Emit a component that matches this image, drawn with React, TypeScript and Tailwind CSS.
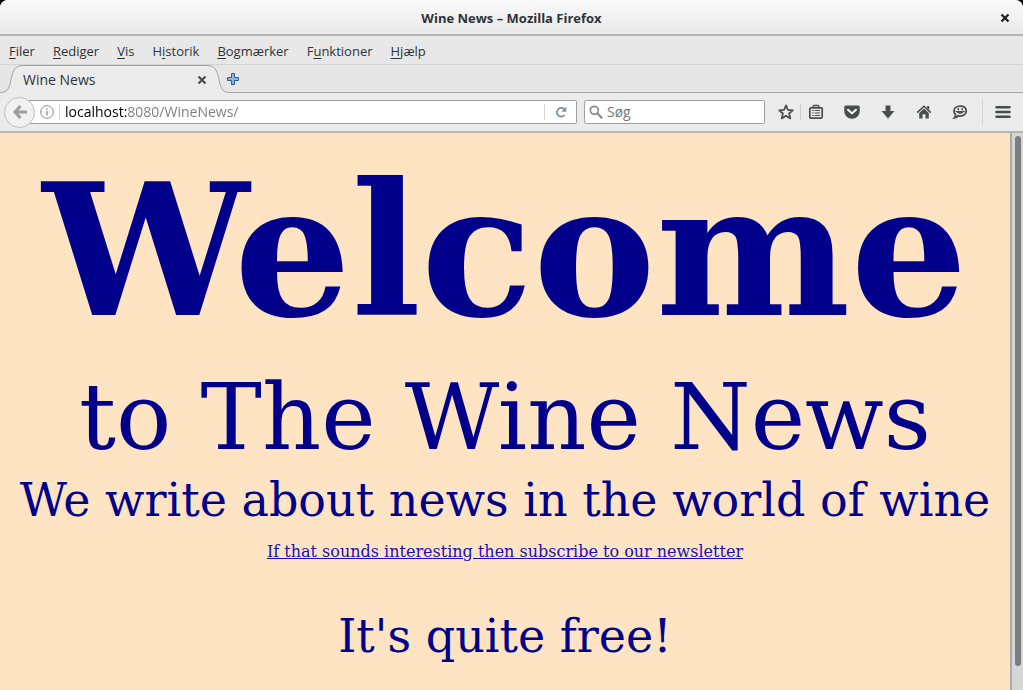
import { useState } from 'react'

const menus = [
  { before: '', key: 'F', after: 'iler' },
  { before: '', key: 'R', after: 'ediger' },
  { before: '', key: 'V', after: 'is' },
  { before: 'H', key: 'i', after: 'storik' },
  { before: '', key: 'B', after: 'ogmærker' },
  { before: 'F', key: 'u', after: 'nktioner' },
  { before: '', key: 'H', after: 'jælp' },
]

const CloseIcon = () => (
  <svg viewBox="0 0 10 10" className="h-[10px] w-[10px]" stroke="currentColor" strokeWidth="2.2">
    <path d="M1.5 1.5 8.5 8.5M8.5 1.5 1.5 8.5" />
  </svg>
)

const StarIcon = () => (
  <svg viewBox="0 0 16 16" className="h-4 w-4" fill="none" stroke="currentColor" strokeWidth="1.7" strokeLinejoin="round">
    <path d="M8 1.4 9.9 5.9 14.8 6.3 11.100 9.500 12.300 14.400 8 11.800 3.700 14.400 4.900 9.500 1.200 6.300 6.100 5.900Z" />
  </svg>
)

const BookmarksIcon = () => (
  <svg viewBox="0 0 16 16" className="h-4 w-4" fill="none" stroke="currentColor">
    <rect x="1.800" y="3.800" width="12.400" height="10.400" rx="1.200" strokeWidth="1.700" />
    <path d="M5.200 3.500V2.400q0-.900.900-.900h3.800q.900 0 .900.900v1.100" strokeWidth="1.500" />
    <path d="M4 6.500h1.600M6.600 6.500H12M4 9h1.600M6.600 9H12M4 11.500h1.600M6.600 11.500H12" strokeWidth="1.200" />
  </svg>
)

const PocketIcon = () => (
  <svg viewBox="0 0 16 16" className="h-4 w-4">
    <path d="M1.800 1.500h12.400q1.500 0 1.500 1.500v4q0 4.800-4.200 6.900-3.500 1.600-7 0Q.3 11.800.3 7V3q0-1.500 1.500-1.500Z" fill="currentColor" />
    <path d="M4 5.700 8 9.400 12 5.700" fill="none" stroke="#fff" strokeWidth="1.900" strokeLinecap="round" strokeLinejoin="round" />
  </svg>
)

const DownloadIcon = () => (
  <svg viewBox="0 0 16 16" className="h-4 w-4" fill="currentColor">
    <path d="M5.500 1.500h5v5.500h4L8 14.500 1.500 7h4Z" />
  </svg>
)

const HomeIcon = () => (
  <svg viewBox="0 0 16 16" className="h-4 w-4">
    <path d="M1.200 8.600 8 2.200l6.800 6.400" fill="none" stroke="currentColor" strokeWidth="1.500" />
    <path d="M11.200 2h2v4l-2-2Z" fill="currentColor" />
    <path d="M3.200 9 8 4.500 12.800 9v5.500H9.500v-4.200h-3v4.200H3.200Z" fill="currentColor" />
  </svg>
)

const ChatIcon = () => (
  <svg viewBox="0 0 16 16" className="h-4 w-4" fill="none" stroke="currentColor" strokeLinecap="round">
    <path d="M8.200 2.200c3.700 0 6 2 6 4.900s-2.300 5-6 5c-.8 0-1.300 0-2-.2-1 1.300-2.200 1.800-3.800 1.900.9-.8 1.200-1.700 1.200-3C2.400 9.800 2 8.500 2 7.100c0-2.900 2.500-4.900 6.200-4.900Z" strokeWidth="1.800" />
    <path d="M4.600 7.600q3.500 3.200 7.200 0Z" strokeWidth="1.300" />
    <path d="M6.300 4.900v.6M10.200 4.900v.6" strokeWidth="1.700" />
  </svg>
)

const MenuIcon = () => (
  <svg viewBox="0 0 16 16" className="h-4 w-4" stroke="currentColor" strokeWidth="2.600" strokeLinecap="round">
    <path d="M1.500 3.200h13M1.500 8h13M1.500 12.800h13" />
  </svg>
)

const TitleBar = () => (
  <header className="flex h-9 items-center rounded-t-lg border-b-2 border-[#b4b4b2] bg-linear-to-b from-[#fafafa] to-[#e9e9e9] px-[10px] pt-px">
    <div className="w-4" />
    <h1 className="flex-1 text-center font-bold text-[#2e3436]">Wine News – Mozilla Firefox</h1>
    <button aria-label="Luk vindue" className="flex w-4 justify-center text-[#1c1f20]">
      <CloseIcon />
    </button>
  </header>
)

const MenuBar = () => (
  <nav className="flex h-7 items-center gap-[18px] px-[9px] pt-[2px]">
    {menus.map((menu) => (
      <button key={menu.key + menu.after} className="text-[#2e3436]">
        {menu.before}
        <u className="underline-offset-2">{menu.key}</u>
        {menu.after}
      </button>
    ))}
  </nav>
)

const TabBar = () => (
  <div className="flex h-[29px] border-t border-[#d2d2d2] bg-[#e6e6e6]">
    <svg viewBox="0 0 23 28" className="h-7 w-[23px] shrink-0" fill="none">
      <path d="M0 27.500C7 27.500 9 24 10.500 17 12.500 7 14 .5 23 .5V28H0Z" fill="#ebebeb" />
      <path d="M0 27.500C7 27.500 9 24 10.500 17 12.500 7 14 .5 23 .5" stroke="#a3a3a3" />
    </svg>
    <div className="flex w-[184px] items-center justify-between border-t border-[#a3a3a3] bg-[#ebebeb] text-[14px] text-[#2e3436]">
      <span>Wine News</span>
      <button aria-label="Luk fane" className="text-[#4c4c4c]">
        <CloseIcon />
      </button>
    </div>
    <svg viewBox="0 0 23 28" className="h-7 w-[23px] shrink-0" fill="none">
      <path d="M23 27.500C16 27.500 14 24 12.500 17 10.500 7 9 .5 0 .5V28H23Z" fill="#ebebeb" />
      <path d="M23 27.500C16 27.500 14 24 12.500 17 10.500 7 9 .5 0 .5" stroke="#a3a3a3" />
    </svg>
    <div className="flex-1 border-b border-[#a3a3a3]">
      <button aria-label="Nyt faneblad" className="flex h-7 items-center">
        <svg viewBox="0 0 12 12" className="-ml-[3px] h-3 w-3" fill="#8db4e0" stroke="#2a5a9c">
          <path d="M4.500.5h3v4h4v3h-4v4h-3v-4h-4v-3h4Z" />
        </svg>
      </button>
    </div>
  </div>
)

const NavBar = () => {
  const [url, setUrl] = useState('localhost:8080/WineNews/')

  return (
    <div className="flex h-10 items-center border-b-2 border-[#b9b5b0] bg-[#ebebeb] pr-3 pl-1 text-[14px] text-[#4a4d4e]">
      <button
        aria-label="Tilbage"
        className="z-10 flex h-[31px] w-[31px] shrink-0 items-center justify-center rounded-full border border-[#bdbdbd] bg-[#f1f1f1] text-[#9d9d9d]"
      >
        <svg viewBox="0 0 16 16" className="h-4 w-4" fill="none" stroke="currentColor" strokeWidth="3">
          <path d="M8.500 2 3 8l5.500 6M3.500 8H15" />
        </svg>
      </button>
      <div className="-ml-2 flex h-6 min-w-0 flex-1 items-center rounded-r-xs border border-[#a0a0a0] bg-white pl-3">
        <svg viewBox="0 0 14 14" className="h-[14px] w-[14px] shrink-0" fill="none" stroke="#8a8a8a">
          <circle cx="7" cy="7" r="6.300" />
          <path d="M7 6v4.500M7 3.500v1.400" strokeWidth="1.300" />
        </svg>
        <div className="mx-[5px] h-4 w-px shrink-0 bg-[#d4d4d4]" />
        {/* host name in black, the rest of the address in grey */}
        <input
          aria-label="Adresse"
          value={url}
          onChange={(e) => setUrl(e.target.value)}
          className="min-w-0 flex-1 bg-linear-to-r from-black from-[61px] to-[#7b7b7b] to-[61px] bg-clip-text text-transparent caret-black outline-none"
        />
        <div className="h-4 w-px bg-[#d4d4d4]" />
        <button aria-label="Genindlæs" className="flex w-[31px] justify-center">
          <svg viewBox="0 0 12 12" className="h-3 w-3" fill="none" stroke="#7f8d9c" strokeWidth="1.700">
            <path d="M9.500 9A4.300 4.300 0 1 1 9 3L10 4.500" />
            <path d="M11.300.8v5H6.500Z" fill="#7f8d9c" stroke="none" />
          </svg>
        </button>
      </div>
      <label className="ml-[7px] flex h-6 w-[181px] shrink-0 items-center gap-1 rounded-xs border border-[#a0a0a0] bg-white px-1">
        <svg viewBox="0 0 14 14" className="h-[14px] w-[14px] shrink-0" fill="none" stroke="#8a8a8a" strokeWidth="1.700">
          <circle cx="5.300" cy="5.300" r="4" />
          <path d="m8.200 8.200 5 5" strokeWidth="2.200" />
        </svg>
        <input aria-label="Søg" placeholder="Søg" className="min-w-0 flex-1 outline-none placeholder:text-[#757575]" />
      </label>
      <div className="ml-[13px] flex shrink-0 items-center">
        <button aria-label="Bogmærk siden"><StarIcon /></button>
        <div className="mr-[7px] ml-[6px] h-4 w-px bg-[#cfcfcf]" />
        <div className="flex gap-5">
          <button aria-label="Bogmærker"><BookmarksIcon /></button>
          <button aria-label="Gem i Pocket"><PocketIcon /></button>
          <button aria-label="Filhentninger"><DownloadIcon /></button>
          <button aria-label="Startside"><HomeIcon /></button>
          <button aria-label="Chat"><ChatIcon /></button>
        </div>
        <div className="mr-3 ml-[14px] h-7 w-px bg-[#d8d8d8]" />
        <button aria-label="Åbn menu"><MenuIcon /></button>
      </div>
    </div>
  )
}

const WinePage = () => (
  <main className="flex min-w-0 flex-1 flex-col items-center overflow-hidden bg-[#ffe4c4] pt-[11px] font-['DejaVu_Serif',serif] whitespace-nowrap text-[#00008b]">
    <h2 className="text-[184px] leading-[212px] font-bold">Welcome</h2>
    <p className="mt-2 text-[92px] leading-[108px]">to The Wine News</p>
    <p className="text-[46px] leading-[56px]">We write about news in the world of wine</p>
    <a href="#newsletter" className="mt-[14px] text-[16px] leading-[20px] text-[#1a10b0] underline">
      If that sounds interesting then subscribe to our newsletter
    </a>
    <p className="mt-[46px] text-[46px] leading-[56px]">It's quite free!</p>
  </main>
)

const App = () => {
  return (
    <div className="bg-black">
      <div className="flex min-h-screen flex-col rounded-t-lg bg-[#e8e8e8] font-['Open_Sans',sans-serif] text-[13px] leading-[18px]">
        <TitleBar />
        <MenuBar />
        <TabBar />
        <NavBar />
        <div className="flex flex-1">
          <WinePage />
          <div className="flex w-[13px] shrink-0 flex-col items-center border-l-2 border-[#aaaaaa] bg-[#d6d6d6] pt-[3px] pb-6">
            <div className="w-[6px] flex-1 rounded-full bg-[#7b7d7e]" />
          </div>
        </div>
      </div>
    </div>
  )
}

export default App
